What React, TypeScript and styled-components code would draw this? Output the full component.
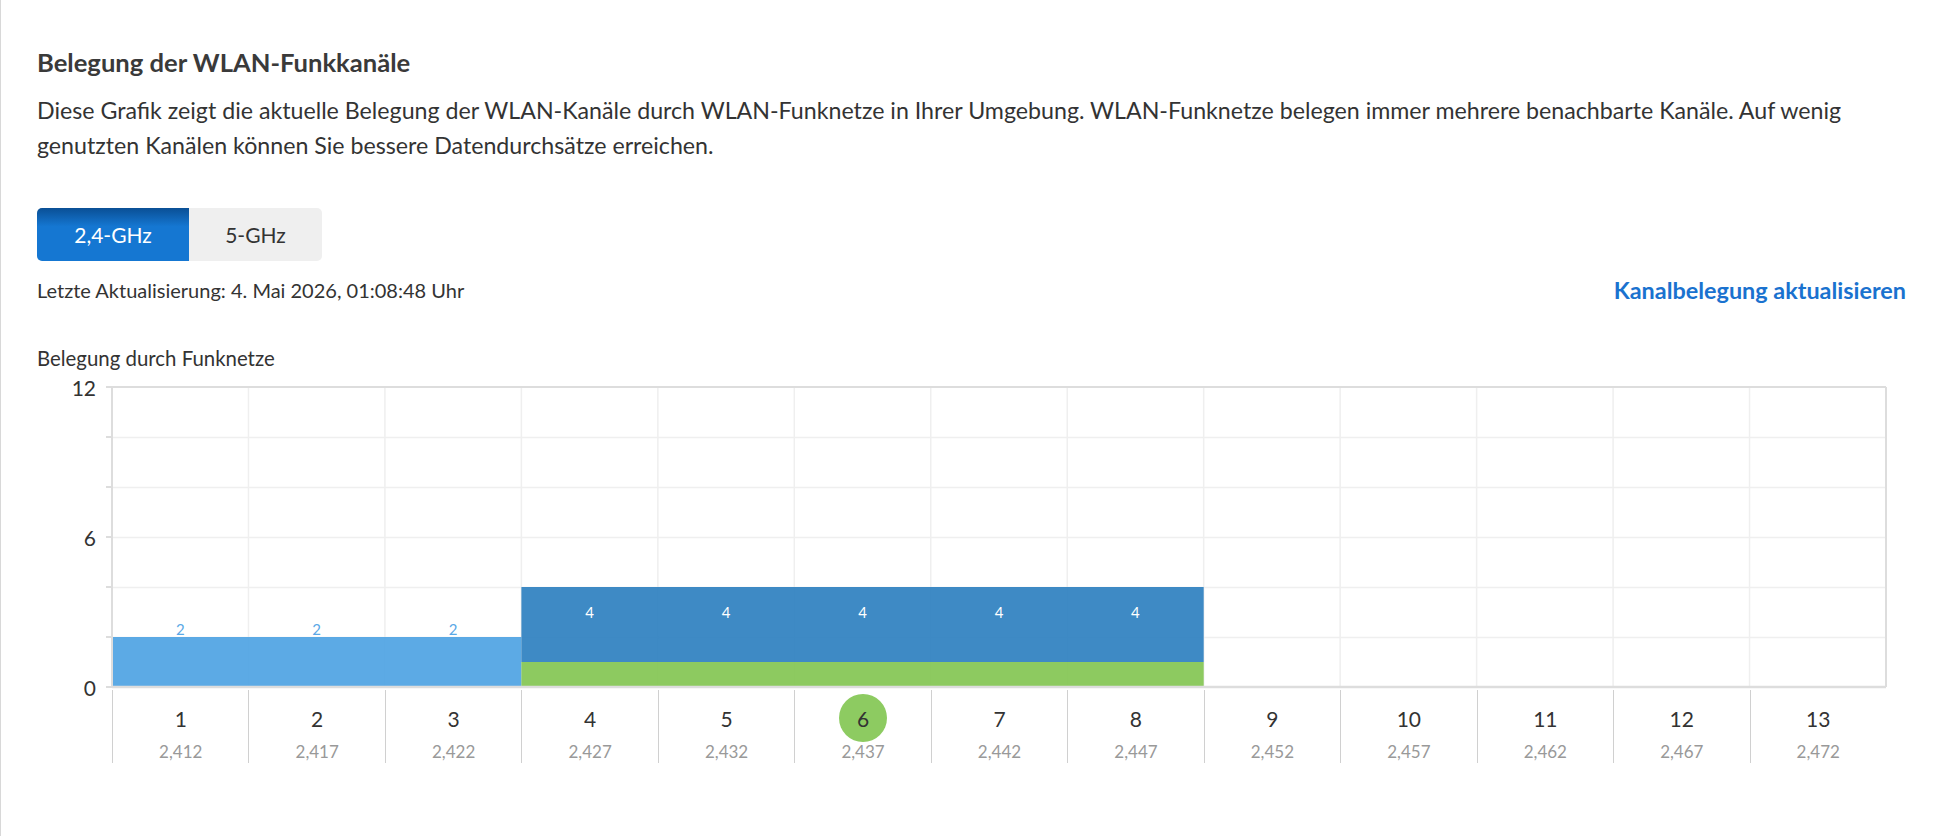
import React from 'react';
import styled, { createGlobalStyle } from 'styled-components';

const FONT = `Lato, "Noto Sans", "Liberation Sans", sans-serif`;

const COLORS = {
  text: '#333333',
  muted: '#999999',
  link: '#1a72cf',
  blue: '#1577d2',
  blueDark: '#0a4f95',
  gray: '#efefef',
  axis: '#dddddd',
  grid: '#efefef',
  sep: '#d0d0d0',
  barLight: '#4ea3e3',
  barDark: '#2e80c0',
  barGreen: '#83c652',
  ownGreen: '#8dcb61',
};

const GlobalStyle = createGlobalStyle`
  html, body { margin: 0; padding: 0; background: #fff; }
  body { font-family: ${FONT}; color: ${COLORS.text}; }
`;

const Page = styled.main`
  min-height: 836px;
  box-sizing: border-box;
  border-left: 1px solid #d8d8d8;
  padding: 46px 31px 0 36px;
`;

const Title = styled.h1`
  margin: 0;
  font-size: 25.6px;
  line-height: 32px;
  font-weight: 700;
  color: #3a3a3a;
`;

const Description = styled.p`
  margin: 15px 0 0;
  font-size: 23.2px;
  line-height: 35px;
  color: ${COLORS.text};
`;

const BandSwitch = styled.div`
  display: inline-flex;
  margin-top: 45px;
  border-radius: 5px;
  overflow: hidden;
  background: ${COLORS.gray};
`;

const BandButton = styled.button<{ active?: boolean }>`
  height: 53px;
  border: 0;
  padding: 0;
  width: ${({ active }) => (active ? '152px' : '133px')};
  font-family: ${FONT};
  font-size: 21px;
  color: ${({ active }) => (active ? '#fff' : COLORS.text)};
  background: ${({ active }) =>
    active ? `linear-gradient(to bottom, ${COLORS.blueDark} 0%, ${COLORS.blue} 35%, ${COLORS.blue} 100%)` : 'transparent'};
  cursor: pointer;
`;

const StatusRow = styled.div`
  display: flex;
  justify-content: space-between;
  align-items: center;
  margin-top: 17px;
  height: 24px;
`;

const UpdatedAt = styled.span`
  font-size: 20px;
  color: ${COLORS.text};
`;

const RefreshLink = styled.a`
  font-size: 23.4px;
  font-weight: 700;
  color: ${COLORS.link};
  text-decoration: none;
  cursor: pointer;
`;

const ChartTitle = styled.div`
  margin-top: 44px;
  font-size: 20.4px;
  line-height: 24px;
  color: ${COLORS.text};
`;

const ChartSvg = styled.svg`
  display: block;
  margin-top: 4px;
  overflow: visible;
  font-family: ${FONT};
`;

const ChannelRow = styled.div`
  display: grid;
  grid-template-columns: repeat(13, 1fr);
  margin-left: 75px;
  width: 1774px;
  height: 73px;
`;

const ChannelCell = styled.div`
  display: flex;
  flex-direction: column;
  align-items: center;
  border-left: 1px solid ${COLORS.sep};
  padding-top: 4px;
`;

const ChannelNumber = styled.div<{ own?: boolean }>`
  width: 48px;
  height: 48px;
  border-radius: 50%;
  display: flex;
  align-items: center;
  justify-content: center;
  font-size: 21px;
  color: ${COLORS.text};
  background: ${({ own }) => (own ? COLORS.ownGreen : 'transparent')};
`;

const Frequency = styled.div`
  font-size: 17px;
  line-height: 20px;
  color: ${COLORS.muted};
`;

const W = 1869;
const X0 = 75;
const X1 = 1849;
const COL = (X1 - X0) / 13;
const TOP = 13;
const BASE = 313;
const UNIT = 25;

const channels = [
  { n: 1, f: '2,412' },
  { n: 2, f: '2,417' },
  { n: 3, f: '2,422' },
  { n: 4, f: '2,427' },
  { n: 5, f: '2,432' },
  { n: 6, f: '2,437' },
  { n: 7, f: '2,442' },
  { n: 8, f: '2,447' },
  { n: 9, f: '2,452' },
  { n: 10, f: '2,457' },
  { n: 11, f: '2,462' },
  { n: 12, f: '2,467' },
  { n: 13, f: '2,472' },
];

const OWN_CHANNEL = 6;

// bars: from channel, to channel (inclusive), bottom + top in units
const bars = [
  { from: 1, to: 3, y0: 0, y1: 2, fill: COLORS.barLight },
  { from: 4, to: 8, y0: 1, y1: 4, fill: COLORS.barDark },
  { from: 4, to: 8, y0: 0, y1: 1, fill: COLORS.barGreen },
];

const labels = [
  ...[1, 2, 3].map((c) => ({ c, v: 2, y: 255, color: '#5aa8e6' })),
  ...[4, 5, 6, 7, 8].map((c) => ({ c, v: 4, y: 238, color: '#ffffff' })),
];

const colX = (c: number) => X0 + (c - 1) * COL;

const OccupancyChart: React.FC = () => (
  <ChartSvg width={W} height={316} viewBox={`0 0 ${W} 316`}>
    {[1, 2, 3, 4, 5].map((k) => (
      <line key={`h${k}`} x1={X0} x2={X1} y1={BASE - k * 50 + 0.5} y2={BASE - k * 50 + 0.5} stroke={COLORS.grid} strokeWidth={1.5} />
    ))}
    {Array.from({ length: 12 }, (_, i) => i + 1).map((i) => (
      <line key={`v${i}`} x1={X0 + i * COL} x2={X0 + i * COL} y1={TOP} y2={BASE} stroke={COLORS.grid} strokeWidth={1.5} />
    ))}
    {bars.map((b, i) => (
      <rect
        key={i}
        x={colX(b.from)}
        width={(b.to - b.from + 1) * COL}
        y={BASE - b.y1 * UNIT}
        height={(b.y1 - b.y0) * UNIT}
        fill={b.fill}
        fillOpacity={0.92}
      />
    ))}
    <line x1={X0} x2={X1} y1={TOP} y2={TOP} stroke={COLORS.axis} strokeWidth={2} />
    <line x1={X0} x2={X1} y1={BASE} y2={BASE} stroke={COLORS.axis} strokeWidth={2.5} />
    <line x1={X0} x2={X0} y1={TOP} y2={BASE} stroke={COLORS.axis} strokeWidth={2} />
    <line x1={X1} x2={X1} y1={TOP} y2={BASE} stroke={COLORS.axis} strokeWidth={2} />
    {[0, 1, 2, 3, 4, 5, 6].map((k) => (
      <line key={`t${k}`} x1={X0 - 6} x2={X0} y1={BASE - k * 50} y2={BASE - k * 50} stroke={COLORS.axis} strokeWidth={2} />
    ))}
    {[
      { v: '12', y: TOP },
      { v: '6', y: TOP + 150 },
      { v: '0', y: BASE },
    ].map((t) => (
      <text key={t.v} x={59} y={t.y} textAnchor="end" dominantBaseline="central" fontSize={21} fill={COLORS.text}>
        {t.v}
      </text>
    ))}
    {labels.map((l) => (
      <text key={l.c} x={colX(l.c) + COL / 2} y={l.y} textAnchor="middle" dominantBaseline="central" fontSize={15} fill={l.color}>
        {l.v}
      </text>
    ))}
  </ChartSvg>
);

export default function App() {
  return (
    <>
      <GlobalStyle />
      <Page>
        <Title>Belegung der WLAN-Funkkanäle</Title>
        <Description>
          Diese Grafik zeigt die aktuelle Belegung der WLAN-Kanäle durch WLAN-Funknetze in Ihrer Umgebung. WLAN-Funknetze belegen immer mehrere benachbarte Kanäle. Auf wenig genutzten Kanälen können Sie bessere Datendurchsätze erreichen.
        </Description>
        <BandSwitch>
          <BandButton active>2,4-GHz</BandButton>
          <BandButton>5-GHz</BandButton>
        </BandSwitch>
        <StatusRow>
          <UpdatedAt>Letzte Aktualisierung: 4. Mai 2026, 01:08:48 Uhr</UpdatedAt>
          <RefreshLink>Kanalbelegung aktualisieren</RefreshLink>
        </StatusRow>
        <ChartTitle>Belegung durch Funknetze</ChartTitle>
        <OccupancyChart />
        <ChannelRow>
          {channels.map((c) => (
            <ChannelCell key={c.n}>
              <ChannelNumber own={c.n === OWN_CHANNEL}>{c.n}</ChannelNumber>
              <Frequency>{c.f}</Frequency>
            </ChannelCell>
          ))}
        </ChannelRow>
      </Page>
    </>
  );
}
